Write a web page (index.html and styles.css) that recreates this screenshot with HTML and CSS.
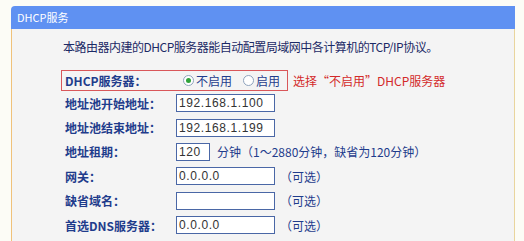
FILE: index.html
```html
<!DOCTYPE html>
<html lang="zh-CN">
<head>
<meta charset="utf-8">
<title>DHCP服务</title>
<link rel="stylesheet" href="styles.css">
</head>
<body>
<div class="panel">
  <div class="panel-head">DHCP服务</div>
  <div class="panel-body">
    <p class="intro">本路由器内建的DHCP服务器能自动配置局域网中各计算机的TCP/IP协议。</p>
    <div class="form">
      <div class="hl-row">
        <div class="hl-box">
          <span class="hl-label">DHCP服务器：</span>
          <span class="radio checked"></span><span class="opt">不启用</span>
          <span class="radio"></span><span class="opt last">启用</span>
        </div>
        <span class="note">选择“不启用”DHCP服务器</span>
      </div>
      <div class="row"><span class="label">地址池开始地址：</span><span class="field">192.168.1.100</span></div>
      <div class="row"><span class="label">地址池结束地址：</span><span class="field">192.168.1.199</span></div>
      <div class="row"><span class="label">地址租期：</span><span class="field short">120</span><span class="hint lease">分钟（1～2880分钟，缺省为120分钟）</span></div>
      <div class="row"><span class="label">网关：</span><span class="field">0.0.0.0</span><span class="hint">（可选）</span></div>
      <div class="row"><span class="label">缺省域名：</span><span class="field"></span><span class="hint">（可选）</span></div>
      <div class="row"><span class="label">首选DNS服务器：</span><span class="field">0.0.0.0</span><span class="hint">（可选）</span></div>
    </div>
  </div>
</div>
</body>
</html>
```
FILE: styles.css
```css
html, body {
  margin: 0;
  padding: 0;
}
body {
  background: #fcfcf6;
  font-family: "Noto Sans CJK SC", "Noto Sans", sans-serif;
  font-size: 12px;
  width: 524px;
  height: 241px;
  overflow: hidden;
}
.panel {
  margin: 6px 9px 0 11px;
  width: 504px;
}
.panel-head {
  height: 23px;
  line-height: 23px;
  background: #5f91f2;
  color: #ffffff;
  font-size: 11px;
  padding-left: 6px;
  border-radius: 4px 0 0 0;
}
.panel-body {
  background: #f4f4f4;
  border-left: 1px solid #f0c27a;
  border-right: 1px solid #e9d59c;
  height: 220px;
}
.intro {
  margin: 0;
  padding: 9px 0 0 51px;
  line-height: 18px;
  color: #1c2a66;
  letter-spacing: -0.5px;
}
.form {
  margin: 14px 0 0 49px;
}
.hl-row {
  display: flex;
  align-items: center;
  height: 21px;
}
.hl-box {
  display: flex;
  align-items: center;
  height: 21px;
  box-sizing: border-box;
  border: 1px solid #d9575a;
  padding-left: 3px;
  width: 227px;
}
.hl-label {
  width: 118px;
  color: #1f3c8c;
  font-weight: 600;
}
.radio {
  width: 11px;
  height: 11px;
  box-sizing: border-box;
  border: 1px solid #8fa3bd;
  border-radius: 50%;
  background: #fff;
  margin-right: 2px;
  display: flex;
  align-items: center;
  justify-content: center;
}
.radio.checked::after {
  content: "";
  width: 5px;
  height: 5px;
  border-radius: 50%;
  background: #2fa33a;
}
.opt {
  color: #1f3c8c;
  margin-right: 11px;
}
.opt.last {
  margin-right: 0;
}
.note {
  color: #d32a2a;
  margin-left: 5px;
}
.row {
  display: flex;
  align-items: center;
  height: 24.4px;
}
.label {
  width: 111px;
  padding-left: 4px;
  color: #1f3c8c;
  font-weight: 600;
}
.field {
  width: 99px;
  height: 18px;
  box-sizing: border-box;
  border: 1px solid #4a67a6;
  background: #ffffff;
  font-family: "Liberation Sans", Arial, sans-serif;
  font-size: 12px;
  line-height: 16px;
  color: #333333;
  padding-left: 2px;
  letter-spacing: 0.6px;
}
.field.short {
  width: 34px;
}
.hint {
  color: #1f3c8c;
  margin-left: 5px;
}
.hint.lease {
  margin-left: 7px;
}
```
